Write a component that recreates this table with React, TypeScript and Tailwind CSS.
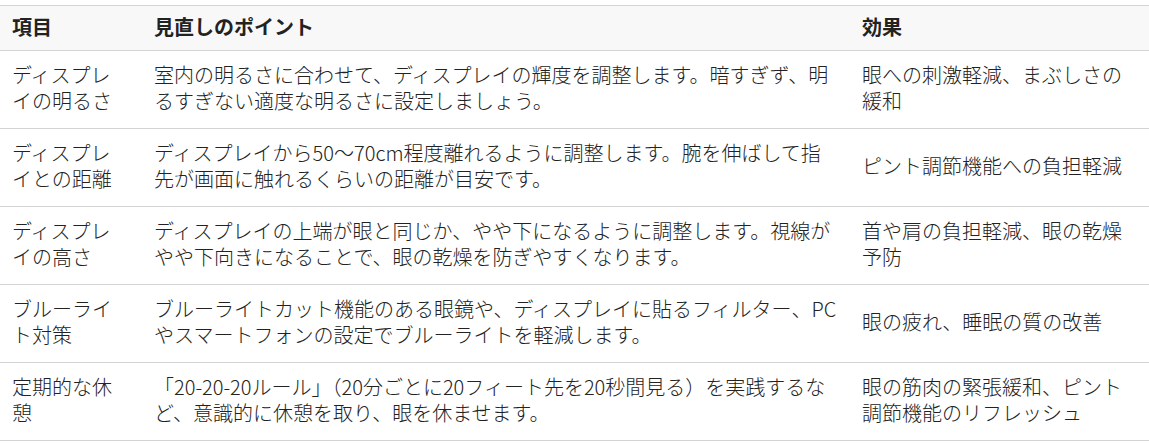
import React from 'react';

const rows = [
    {
        item: 'ディスプレイの明るさ',
        point: '室内の明るさに合わせて、ディスプレイの輝度を調整します。暗すぎず、明るすぎない適度な明るさに設定しましょう。',
        effect: '眼への刺激軽減、まぶしさの緩和',
    },
    {
        item: 'ディスプレイとの距離',
        point: 'ディスプレイから50〜70cm程度離れるように調整します。腕を伸ばして指先が画面に触れるくらいの距離が目安です。',
        effect: 'ピント調節機能への負担軽減',
    },
    {
        item: 'ディスプレイの高さ',
        point: 'ディスプレイの上端が眼と同じか、やや下になるように調整します。視線がやや下向きになることで、眼の乾燥を防ぎやすくなります。',
        effect: '首や肩の負担軽減、眼の乾燥予防',
    },
    {
        item: 'ブルーライト対策',
        point: 'ブルーライトカット機能のある眼鏡や、ディスプレイに貼るフィルター、PCやスマートフォンの設定でブルーライトを軽減します。',
        effect: '眼の疲れ、睡眠の質の改善',
    },
    {
        item: '定期的な休憩',
        point: '「20-20-20ルール」（20分ごとに20フィート先を20秒間見る）を実践するなど、意識的に休憩を取り、眼を休ませます。',
        effect: '眼の筋肉の緊張緩和、ピント調節機能のリフレッシュ',
    },
];

const App = () => {
    return (
        <div className="bg-white pt-[5px] font-['Noto_Sans_CJK_JP','Noto_Sans',sans-serif] text-[20px] text-[#222]">
            <table className="w-full table-fixed border-collapse">
                <colgroup>
                    <col className="w-[142px]" />
                    <col className="w-[708px]" />
                    <col />
                </colgroup>
                <thead>
                    <tr className="bg-[#f8f8f8] border-t border-b border-[#d4d4d4]">
                        <th className="px-3 pt-[8px] pb-[10px] text-left font-bold leading-[26px]">項目</th>
                        <th className="px-3 pt-[8px] pb-[10px] text-left font-bold leading-[26px]">見直しのポイント</th>
                        <th className="px-3 pt-[8px] pb-[10px] text-left font-bold leading-[26px]">効果</th>
                    </tr>
                </thead>
                <tbody>
                    {rows.map((r) => (
                        <tr key={r.item} className="border-b border-[#d4d4d4]">
                            <td className="px-3 pt-[10.5px] pb-[14.5px] align-middle font-light leading-[26px]">{r.item}</td>
                            <td className="px-3 pt-[10.5px] pb-[14.5px] align-middle font-light leading-[26px]">{r.point}</td>
                            <td className="px-3 pt-[10.5px] pb-[14.5px] align-middle font-light leading-[26px]">{r.effect}</td>
                        </tr>
                    ))}
                </tbody>
            </table>
        </div>
    );
};

export default App;
